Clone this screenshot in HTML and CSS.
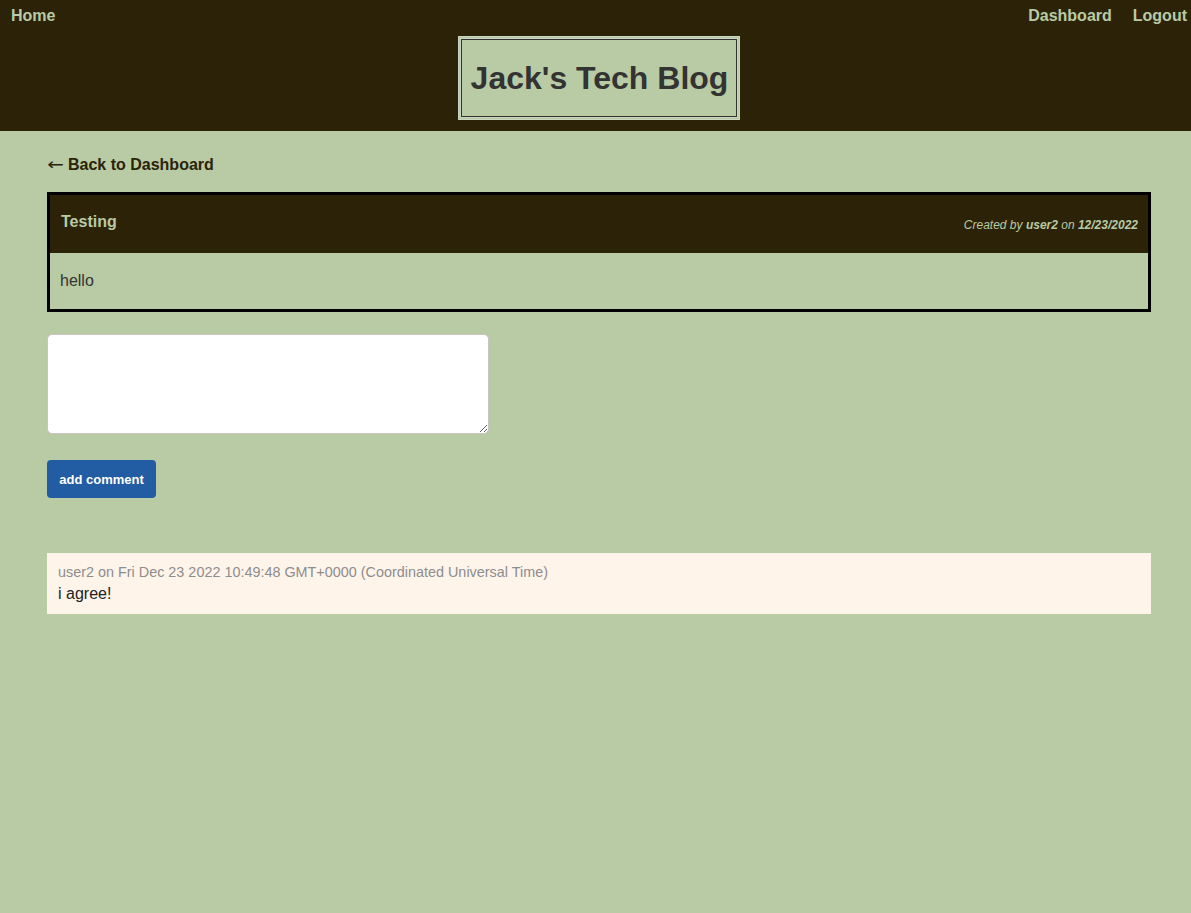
FILE: index.html
```html
<!DOCTYPE html>
<html lang="en">
<head>
<meta charset="utf-8">
<title>Jack's Tech Blog</title>
<link rel="stylesheet" href="styles.css">
</head>
<body>
<header class="site-header">
  <nav class="nav">
    <a class="nav-link" href="#">Home</a>
    <div class="nav-right">
      <a class="nav-link" href="#">Dashboard</a>
      <a class="nav-link" href="#">Logout</a>
    </div>
  </nav>
  <div class="title-wrap">
    <h1 class="site-title">Jack's Tech Blog</h1>
  </div>
</header>
<main class="main">
  <a class="back-link" href="#"><span class="arrow">&larr;</span>Back to Dashboard</a>
  <article class="post">
    <div class="post-head">
      <h2 class="post-title">Testing</h2>
      <p class="post-meta">Created by <b>user2</b> on <b>12/23/2022</b></p>
    </div>
    <div class="post-body">hello</div>
  </article>
  <form class="comment-form">
    <textarea class="comment-input"></textarea>
    <button class="btn" type="button">add comment</button>
  </form>
  <section class="comments">
    <div class="comment">
      <p class="comment-meta">user2 on Fri Dec 23 2022 10:49:48 GMT+0000 (Coordinated Universal Time)</p>
      <p class="comment-text">i agree!</p>
    </div>
  </section>
</main>
</body>
</html>
```
FILE: styles.css
```css
html, body {
  margin: 0;
  padding: 0;
}
body {
  background: #b8cba4;
  font-family: "Liberation Sans", Arial, sans-serif;
  color: #333;
  min-height: 913px;
}
a { text-decoration: none; }

.site-header {
  background: #2c2207;
  height: 131px;
  box-sizing: border-box;
}
.nav {
  display: flex;
  justify-content: space-between;
  align-items: center;
  height: 31px;
  padding: 0 4px 0 11px;
}
.nav-right {
  display: flex;
  gap: 21px;
}
.nav-link {
  color: #b8cba4;
  font-weight: bold;
  font-size: 16px;
}
.title-wrap {
  display: flex;
  justify-content: center;
  padding: 5px 0 0 6px;
}
.site-title {
  margin: 0;
  box-sizing: border-box;
  width: 282px;
  height: 84px;
  display: flex;
  align-items: center;
  justify-content: center;
  background: #b8cba4;
  border: 3px double #c9d3c0;
  box-shadow: inset 0 0 0 1px #333;
  font-size: 32px;
  font-weight: bold;
  color: #333;
  padding: 1px 0 0 2px;
}

.main {
  width: 1104px;
  margin-left: 47px;
  padding-top: 25px;
}
.back-link {
  display: flex;
  align-items: center;
  color: #2c2207;
  font-weight: bold;
  font-size: 16px;
  line-height: 18px;
}
.arrow {
  display: inline-block;
  font-family: "DejaVu Sans", sans-serif;
  font-weight: normal;
  font-size: 16px;
  transform: scaleX(1.25);
  transform-origin: left center;
  width: 21px;
}
.post {
  margin-top: 18px;
  border: 3px solid #000;
}
.post-head {
  background: #2c2207;
  height: 58px;
  display: flex;
  justify-content: space-between;
  align-items: center;
  padding: 0 10px 0 11px;
}
.post-title {
  margin: 0 0 4px;
  font-size: 16px;
  font-weight: bold;
  color: #b8cba4;
}
.post-meta {
  margin: 2px 0 0;
  font-size: 12px;
  font-style: italic;
  color: #b8cba4;
}
.post-body {
  height: 56px;
  display: flex;
  align-items: center;
  padding: 0 10px;
  font-size: 16px;
  color: #333;
}

.comment-form {
  display: flex;
  flex-direction: column;
  align-items: flex-start;
  margin-top: 22px;
  gap: 26px;
}
.comment-input {
  box-sizing: border-box;
  width: 442px;
  height: 100px;
  border: 1px solid #c6c6c6;
  border-radius: 5px;
  background: #fff;
  margin: 0;
}
.btn {
  box-sizing: border-box;
  width: 109px;
  height: 38px;
  border: none;
  border-radius: 4px;
  background: #225ca3;
  color: #fff;
  font-family: "Liberation Sans", Arial, sans-serif;
  font-size: 13px;
  font-weight: bold;
  padding: 0;
}

.comments {
  margin-top: 55px;
}
.comment {
  background: #fff4ea;
  height: 61px;
  box-sizing: border-box;
  padding: 10px 11px 0;
}
.comment-meta {
  margin: 0;
  font-size: 14.4px;
  line-height: 18px;
  color: #8d8d8d;
}
.comment-text {
  margin: 4px 0 0;
  font-size: 16px;
  line-height: 18px;
  color: #222;
}
```
